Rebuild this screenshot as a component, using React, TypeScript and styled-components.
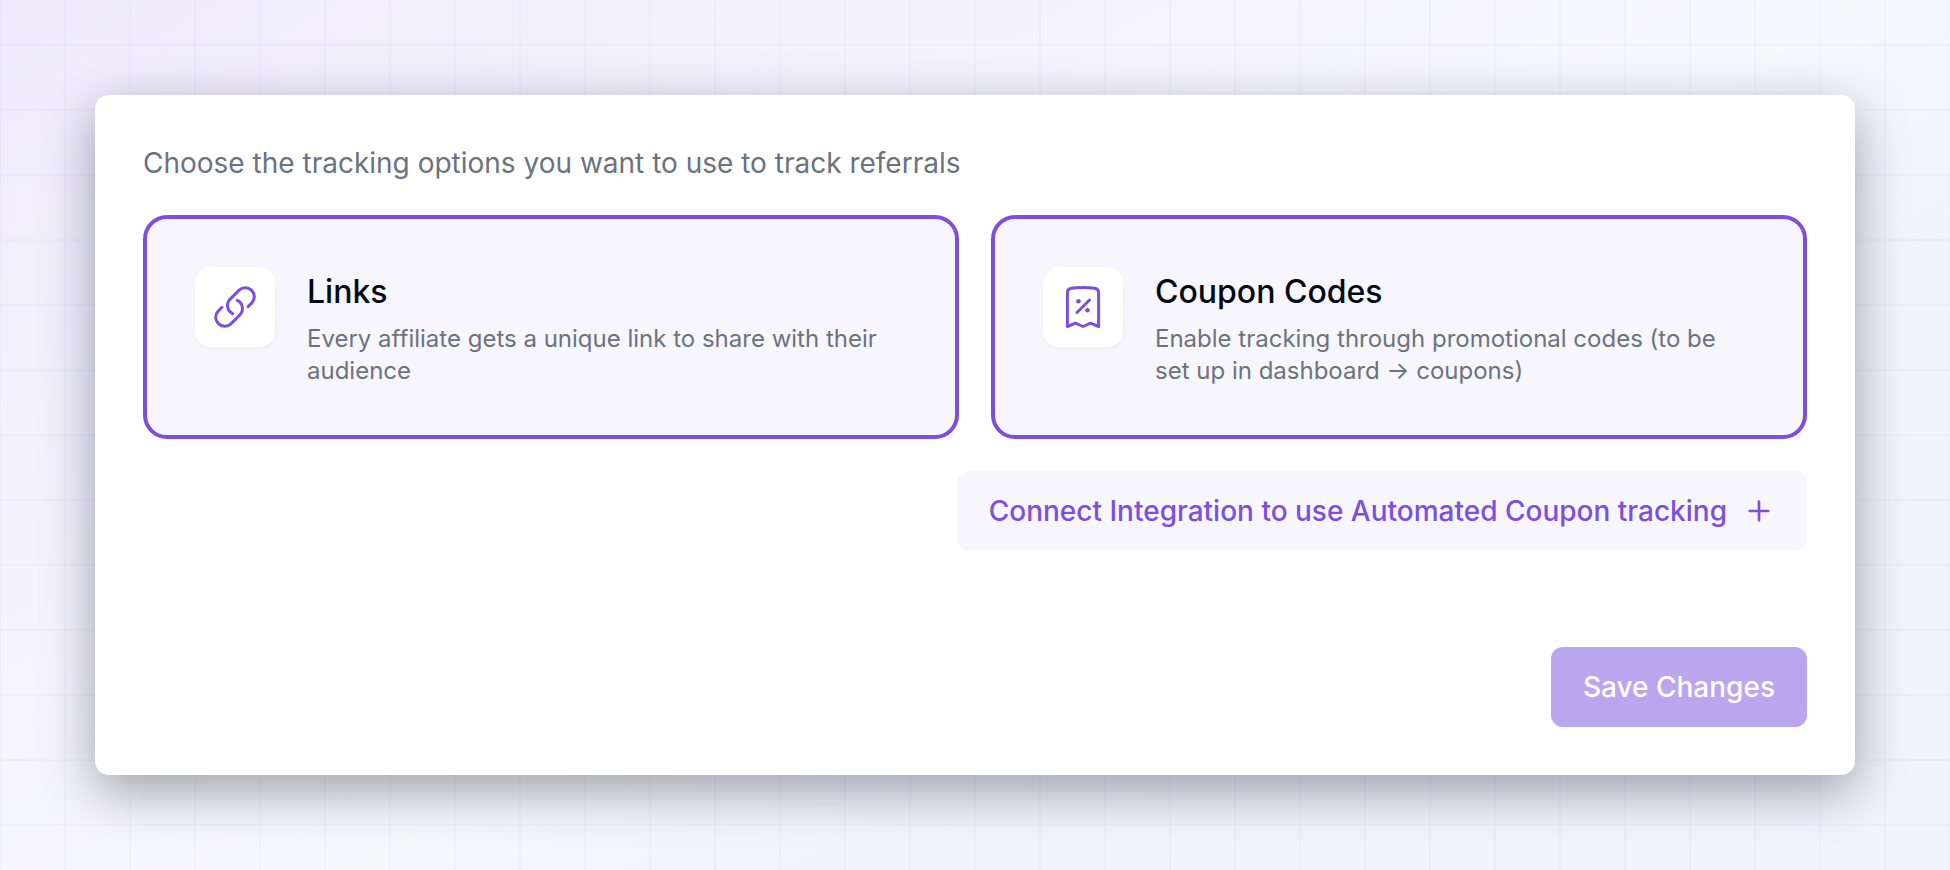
import React from "react";
import styled, { createGlobalStyle } from "styled-components";

const GlobalStyle = createGlobalStyle`
  *, *::before, *::after { box-sizing: border-box; }
  body {
    margin: 0;
    font-family: Inter, "Liberation Sans", sans-serif;
    font-optical-sizing: none;
    -webkit-font-smoothing: antialiased;
  }
  button { font: inherit; border: 0; }
`;

const Page = styled.main`
  min-height: 100vh;
  padding: 95px;
  background-image:
    linear-gradient(to right, rgba(99, 91, 220, 0.035) 2px, transparent 2px),
    linear-gradient(to bottom, rgba(99, 91, 220, 0.035) 2px, transparent 2px),
    linear-gradient(150deg, #efebfb 0%, #f5f3ff 33%, #f7f8fc 54%, #f2f4fe 64%, #eff4fd 80%, #eff4fd 100%);
  background-size: 65px 65px, 65px 65px, 100% 100%;
  background-position: -1px 0, 0 44px, 0 0;
`;

const Panel = styled.form`
  display: flex;
  flex-direction: column;
  gap: 32px;
  padding: 48px;
  border-radius: 14px;
  background: #fff;
  box-shadow: 0 16px 52px rgba(15, 18, 40, 0.38);
`;

const Intro = styled.p`
  margin: 0;
  font-size: 28px;
  line-height: 40px;
  color: #6b7280;
`;

const Options = styled.div`
  display: grid;
  grid-template-columns: 1fr 1fr;
  gap: 32px;
`;

const Option = styled.button`
  display: flex;
  align-items: flex-start;
  gap: 32px;
  padding: 48px;
  border: 4px solid #7c4fe0;
  border-radius: 24px;
  background: #f7f6fd;
  text-align: left;
  cursor: pointer;
`;

const IconTile = styled.span`
  display: flex;
  flex: none;
  align-items: center;
  justify-content: center;
  width: 80px;
  height: 80px;
  border-radius: 16px;
  background: #fff;
  color: #7c4fe0;
  box-shadow: 0 2px 4px rgba(0, 0, 0, 0.04);
`;

const OptionText = styled.span`
  display: flex;
  flex-direction: column;
  gap: 6px;
`;

const OptionTitle = styled.span`
  font-size: 32px;
  font-weight: 500;
  line-height: 50px;
  color: #020817;
`;

const OptionDetail = styled.span`
  font-size: 24px;
  line-height: 32px;
  color: #6b7280;
`;

const Button = styled.button<{ $primary?: boolean }>`
  display: flex;
  align-items: center;
  align-self: flex-end;
  gap: 16px;
  height: 80px;
  padding: 0 32px;
  border-radius: 12px;
  background: ${(p) => (p.$primary ? "#7c4fe0" : "#f7f6fd")};
  color: ${(p) => (p.$primary ? "#fff" : "#7c4fe0")};
  font-size: 28px;
  font-weight: 500;
  line-height: 40px;
  cursor: pointer;

  &:disabled {
    background: #bca5ef;
    cursor: default;
  }
`;

const Footer = styled.footer`
  display: flex;
  justify-content: flex-end;
  padding-top: 64px;
`;

type IconProps = { size: number; stroke?: number; children: React.ReactNode };

const Icon = ({ size, stroke = 1.5, children }: IconProps) => (
  <svg
    width={size}
    height={size}
    viewBox="0 0 24 24"
    fill="none"
    stroke="currentColor"
    strokeWidth={stroke}
    strokeLinecap="round"
    strokeLinejoin="round"
    aria-hidden="true"
  >
    {children}
  </svg>
);

const LinkIcon = () => (
  <Icon size={48}>
    <path d="M18.5 11.86L20.43 9.93A4.5 4.5 0 0 0 14.07 3.57L9.57 8.07A4.5 4.5 0 0 0 10.83 15.3" />
    <path d="M5.5 12.14L3.57 14.07A4.5 4.5 0 0 0 9.93 20.43L14.43 15.93A4.5 4.5 0 0 0 13.17 8.7" />
  </Icon>
);

const CouponIcon = () => (
  <Icon size={48}>
    <path d="M4.2 21.75V4.8C4.2 3.4 4.7 2.85 6 2.6C7.6 2.35 9.6 2.25 12 2.25S16.4 2.35 18 2.6C19.3 2.85 19.8 3.4 19.8 4.8V21.75L15.75 20.1L12 21.75L8.25 20.1Z" />
    <path d="M9 14.75L15.25 8.5" />
    <g fill="currentColor" stroke="none">
      <circle cx="9.75" cy="9.1" r="1.15" />
      <circle cx="14.25" cy="13.6" r="1.15" />
    </g>
  </Icon>
);

const PlusIcon = () => (
  <Icon size={32} stroke={2}>
    <path d="M12 5V19M5 12H19" />
  </Icon>
);

const options = [
  {
    title: "Links",
    detail: "Every affiliate gets a unique link to share with their audience",
    icon: <LinkIcon />,
  },
  {
    title: "Coupon Codes",
    detail: "Enable tracking through promotional codes (to be set up in dashboard → coupons)",
    icon: <CouponIcon />,
  },
];

export default function App() {
  return (
    <>
      <GlobalStyle />
      <Page>
        <Panel>
          <Intro>Choose the tracking options you want to use to track referrals</Intro>
          <Options>
            {options.map((option) => (
              <Option key={option.title} type="button" aria-pressed="true">
                <IconTile>{option.icon}</IconTile>
                <OptionText>
                  <OptionTitle>{option.title}</OptionTitle>
                  <OptionDetail>{option.detail}</OptionDetail>
                </OptionText>
              </Option>
            ))}
          </Options>
          <Button type="button">
            Connect Integration to use Automated Coupon tracking
            <PlusIcon />
          </Button>
          <Footer>
            <Button type="submit" $primary disabled>
              Save Changes
            </Button>
          </Footer>
        </Panel>
      </Page>
    </>
  );
}
